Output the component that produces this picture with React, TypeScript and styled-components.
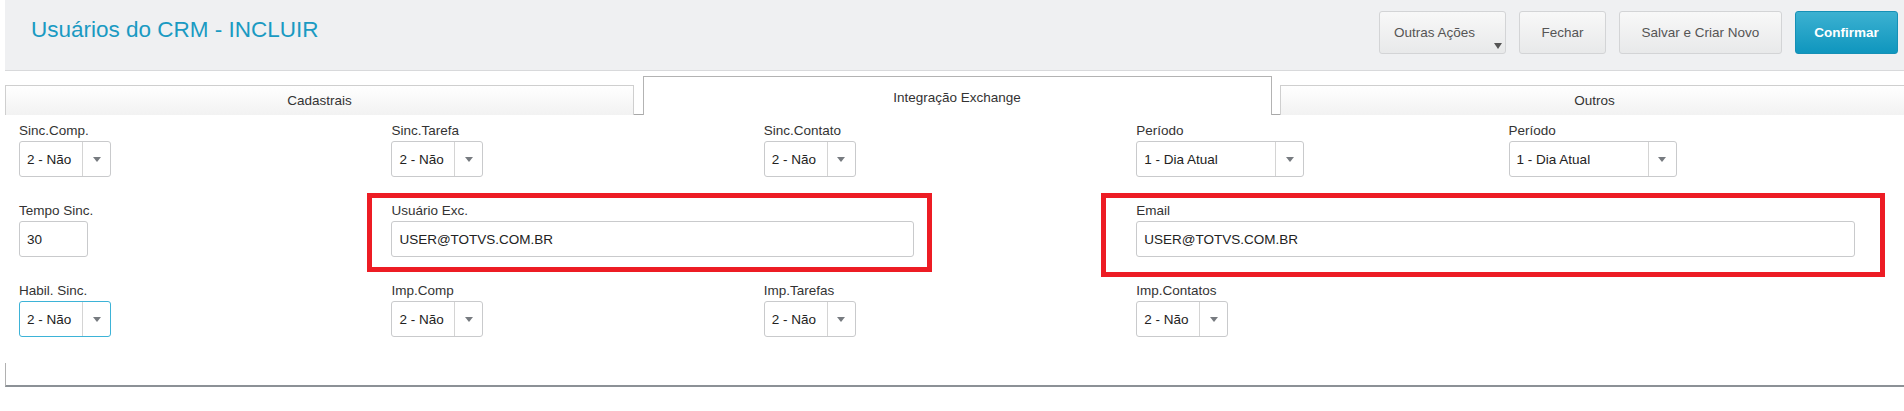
import React from "react";
import styled, { createGlobalStyle } from "styled-components";

const GlobalStyle = createGlobalStyle`
  html, body {
    margin: 0;
    padding: 0;
    background: #fff;
    overflow: hidden;
  }
  body {
    font-family: "Liberation Sans", Arial, sans-serif;
    color: #333;
  }
`;

const Page = styled.div`
  padding-left: 5px;
`;

const Header = styled.header`
  display: flex;
  align-items: flex-start;
  justify-content: space-between;
  height: 70px;
  padding: 0 6px 0 26px;
  background: #eff0f2;
  border-bottom: 1px solid #d8d9db;
`;

const Title = styled.h1`
  margin: 17px 0 0;
  font-size: 22.5px;
  line-height: 26px;
  font-weight: 400;
  color: #1a9ac2;
`;

const Actions = styled.div`
  display: flex;
  gap: 13px;
  margin-top: 11px;
`;

const ActionButton = styled.button<{ $primary?: boolean; $width: number }>`
  display: flex;
  align-items: center;
  justify-content: center;
  box-sizing: border-box;
  width: ${(p) => p.$width}px;
  height: 43px;
  padding: 0;
  border: 1px solid ${(p) => (p.$primary ? "#1590b6" : "#d3d4d6")};
  border-radius: 3px;
  background: ${(p) =>
    p.$primary
      ? "linear-gradient(#3cb1d1, #0f96be)"
      : "linear-gradient(#f8f8f8, #e8e9ea)"};
  color: ${(p) => (p.$primary ? "#fff" : "#555")};
  font-family: "Liberation Sans", Arial, sans-serif;
  font-size: 13.5px;
  font-weight: ${(p) => (p.$primary ? 700 : 400)};
`;

const MenuButton = styled(ActionButton)`
  justify-content: flex-start;
  padding-left: 14px;
`;

const Caret = styled.svg`
  align-self: flex-end;
  margin: 0 3px 4px auto;
`;

const TabBar = styled.div`
  display: flex;
  align-items: flex-end;
  gap: 8.5px;
  margin-top: 5px;
  background: linear-gradient(#a8a8a8, #a8a8a8) left bottom / 100% 1px no-repeat;
`;

const Tab = styled.div<{ $active?: boolean }>`
  flex: 0 0 629px;
  box-sizing: border-box;
  height: ${(p) => (p.$active ? 39 : 30)}px;
  display: flex;
  align-items: center;
  justify-content: center;
  padding-top: ${(p) => (p.$active ? 3 : 0)}px;
  border: 1px solid ${(p) => (p.$active ? "#b3b3b3" : "#cfcfcf")};
  border-bottom: none;
  background: ${(p) => (p.$active ? "#fff" : "linear-gradient(#ffffff, #f2f2f2)")};
  font-size: 13.5px;
  color: #333;
`;

const Form = styled.div`
  display: grid;
  grid-template-columns: repeat(5, 1fr);
  row-gap: 26px;
  padding: 8px 23px 26px 14px;
`;

type Mark = { top: number; right: number; bottom: number; left: number };

const Field = styled.div<{ $span?: number; $mark?: Mark }>`
  position: relative;
  grid-column: ${(p) => (p.$span ? `span ${p.$span}` : "auto")};
  justify-self: start;

  ${(p) =>
    p.$mark &&
    `
    &::after {
      content: "";
      position: absolute;
      top: ${-p.$mark.top}px;
      right: ${-p.$mark.right}px;
      bottom: ${-p.$mark.bottom}px;
      left: ${-p.$mark.left}px;
      border: 5px solid #ed1c24;
      pointer-events: none;
    }
  `}
`;

const Label = styled.label`
  display: block;
  margin-bottom: 2px;
  font-size: 13.5px;
  line-height: 16px;
  color: #333;
`;

const SelectBox = styled.div<{ $width: number; $focused?: boolean }>`
  display: flex;
  box-sizing: border-box;
  width: ${(p) => p.$width}px;
  height: 36px;
  border: 1px solid ${(p) => (p.$focused ? "#3db3d7" : "#c9cacc")};
  border-radius: 3px;
  background: #fff;
`;

const SelectValue = styled.span`
  flex: 1;
  display: flex;
  align-items: center;
  padding-left: 7px;
  border-right: 1px solid #d4d4d4;
  font-size: 13.5px;
  color: #222;
`;

const SelectArrow = styled.span`
  flex: 0 0 27px;
  display: flex;
  align-items: center;
  justify-content: center;
`;

const TextInput = styled.div<{ $width: number }>`
  display: flex;
  align-items: center;
  box-sizing: border-box;
  width: ${(p) => p.$width}px;
  height: 36px;
  padding: 0 7px;
  border: 1px solid #c9cacc;
  border-radius: 3px;
  background: #fff;
  font-size: 13.5px;
  color: #222;
`;

const PanelFoot = styled.div`
  height: 22px;
  border-left: 1px solid #b1b1b1;
  border-bottom: 2px solid #8c9196;
`;

const Triangle = ({ color }: { color: string }) => (
  <svg width="8" height="5" viewBox="0 0 8 5">
    <polygon points="0,0 8,0 4,5" fill={color} />
  </svg>
);

const Select = ({
  value,
  width = 92,
  focused,
}: {
  value: string;
  width?: number;
  focused?: boolean;
}) => (
  <SelectBox $width={width} $focused={focused}>
    <SelectValue>{value}</SelectValue>
    <SelectArrow>
      <Triangle color="#777b80" />
    </SelectArrow>
  </SelectBox>
);

const App = () => {
  return (
    <Page>
      <GlobalStyle />
      <Header>
        <Title>Usuários do CRM - INCLUIR</Title>
        <Actions>
          <MenuButton $width={127}>
            Outras Ações
            <Caret width="8" height="6" viewBox="0 0 8 6">
              <polygon points="0,0 8,0 4,6" fill="#555" />
            </Caret>
          </MenuButton>
          <ActionButton $width={87}>Fechar</ActionButton>
          <ActionButton $width={163}>Salvar e Criar Novo</ActionButton>
          <ActionButton $width={103} $primary>
            Confirmar
          </ActionButton>
        </Actions>
      </Header>

      <TabBar>
        <Tab>Cadastrais</Tab>
        <Tab $active>Integração Exchange</Tab>
        <Tab>Outros</Tab>
      </TabBar>

      <Form>
        <Field>
          <Label>Sinc.Comp.</Label>
          <Select value="2 - Não" />
        </Field>
        <Field>
          <Label>Sinc.Tarefa</Label>
          <Select value="2 - Não" />
        </Field>
        <Field>
          <Label>Sinc.Contato</Label>
          <Select value="2 - Não" />
        </Field>
        <Field>
          <Label>Período</Label>
          <Select value="1 - Dia Atual" width={168} />
        </Field>
        <Field>
          <Label>Período</Label>
          <Select value="1 - Dia Atual" width={168} />
        </Field>

        <Field>
          <Label>Tempo Sinc.</Label>
          <TextInput $width={69}>30</TextInput>
        </Field>
        <Field $span={2} $mark={{ top: 10, right: 18, bottom: 15, left: 24 }}>
          <Label>Usuário Exc.</Label>
          <TextInput $width={523}>USER@TOTVS.COM.BR</TextInput>
        </Field>
        <Field $span={2} $mark={{ top: 10, right: 30, bottom: 20, left: 35 }}>
          <Label>Email</Label>
          <TextInput $width={719}>USER@TOTVS.COM.BR</TextInput>
        </Field>

        <Field>
          <Label>Habil. Sinc.</Label>
          <Select value="2 - Não" focused />
        </Field>
        <Field>
          <Label>Imp.Comp</Label>
          <Select value="2 - Não" />
        </Field>
        <Field>
          <Label>Imp.Tarefas</Label>
          <Select value="2 - Não" />
        </Field>
        <Field>
          <Label>Imp.Contatos</Label>
          <Select value="2 - Não" />
        </Field>
      </Form>

      <PanelFoot />
    </Page>
  );
};

export default App;
